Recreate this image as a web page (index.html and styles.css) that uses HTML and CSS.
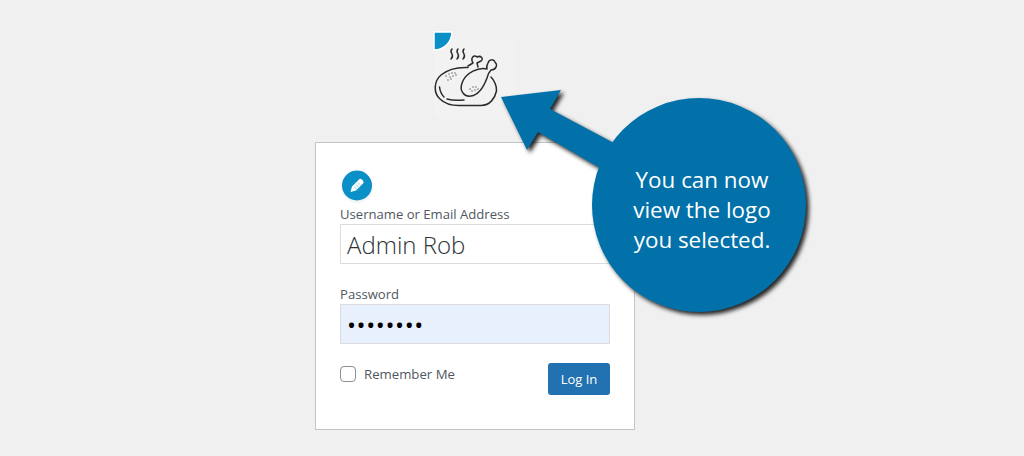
FILE: index.html
```html
<!DOCTYPE html>
<html lang="en">
<head>
<meta charset="utf-8">
<title>Log In</title>
<link rel="stylesheet" href="styles.css">
</head>
<body>
<main class="page">
  <div class="logo">
    <svg class="logo-art" viewBox="0 0 110 100" width="110" height="100" aria-hidden="true">
      <rect x="13" y="20" width="82" height="80" rx="10" fill="#f2f2f2"/>
      <path d="M13 12h18a18 18 0 0 1-18 18z" fill="#0a8fc6" stroke="#fff" stroke-width="1.5"/>
      <g fill="none" stroke="#2b2b2b" stroke-width="1.5" stroke-linecap="round" stroke-linejoin="round">
        <path d="M31 29c-2 2-1 3 0 5s1 3-1 5M37 29c-2 2-1 3 0 5s1 3-1 5M43 29c-2 2-1 3 0 5s1 3-1 5"/>
        <path d="M47 47.500C35 47 26 50 20 55C13 61 12 73 19 79C24 84 31 85.500 38 85.500H60C69 85.500 74 78 75.500 71C76 66 73 60 70 57"/>
        <path d="M18.500 67C19 71 20 74 23 77M26 79C31 80.500 37 80.500 43 80"/>
        <path d="M47 46L52 43C49 38 53 34 56 37C60 35 63 39 60 41L56 43L57 47"/>
        <path d="M66 49C58 47 45 52 41 63C38 72 44 77 50 76C58 75 63 66 66 58C67 54 68 52 70 50C75 50 77 45 74 42C73 39 68 39 67 43C66 45 65 47 66 49Z"/>
      </g>
      <g fill="#555">
        <circle cx="25" cy="56" r=".7"/><circle cx="28" cy="54" r=".7"/><circle cx="31" cy="53" r=".7"/><circle cx="34" cy="53" r=".7"/><circle cx="29" cy="57" r=".7"/><circle cx="32" cy="56" r=".7"/><circle cx="35" cy="55" r=".7"/><circle cx="27" cy="60" r=".7"/><circle cx="30" cy="59" r=".7"/>
        <circle cx="49" cy="69" r=".7"/><circle cx="52" cy="67" r=".7"/><circle cx="55" cy="67" r=".7"/><circle cx="51" cy="71" r=".7"/><circle cx="54" cy="70" r=".7"/><circle cx="57" cy="69" r=".7"/>
      </g>
    </svg>
  </div>
  <form class="card">
    <svg class="badge" viewBox="0 0 34 34" width="34" height="34" aria-hidden="true">
      <circle cx="17" cy="18" r="16" fill="#f4f4f4"/>
      <circle cx="17" cy="16.500" r="15" fill="#0a8fc6"/>
      <path d="M10.500 23l1.500-5.500 7-7a2 2 0 0 1 2.800 0l1.200 1.200a2 2 0 0 1 0 2.800l-7 7z" fill="#fff"/>
      <path d="M14 17.500l4 4M16 15.500l4 4M18 13.500l3 3" stroke="#6fc3e3" stroke-width=".8"/>
    </svg>
    <label class="field-label" for="user">Username or Email Address</label>
    <input class="field field-user" id="user" type="text" value="Admin Rob" readonly>
    <label class="field-label field-label-pass" for="pass">Password</label>
    <input class="field field-pass" id="pass" type="password" value="password" readonly>
    <div class="actions">
      <label class="remember"><input class="check" type="checkbox"> Remember Me</label>
      <button class="submit" type="button">Log In</button>
    </div>
  </form>
</main>
<div class="callout">
  <svg class="callout-art" viewBox="0 0 1024 456" width="1024" height="456" aria-hidden="true">
    <g class="callout-shape">
      <polygon points="501,97 561,90 550,109 614,143 600,168 538,132 527,150" fill="#0271a9"/>
      <circle cx="699" cy="205" r="107" fill="#0271a9"/>
    </g>
  </svg>
  <p class="callout-text">You can now<br>view the logo<br>you selected.</p>
</div>
</body>
</html>
```
FILE: styles.css
```css
html, body {
  margin: 0;
  height: 456px;
  overflow: hidden;
  background: #f0f0f1;
}

.page {
  width: 950px;
  display: flex;
  flex-direction: column;
  align-items: center;
  font-family: "Open Sans", "Noto Sans", sans-serif;
  color: #50575e;
}

.logo {
  height: 142px;
  width: 320px;
  display: flex;
  justify-content: center;
  padding-top: 20px;
  box-sizing: border-box;
}

.logo-art {
  display: block;
  margin-left: 1px;
  flex: none;
}

.card {
  box-sizing: border-box;
  width: 320px;
  height: 288px;
  background: #fff;
  border: 1px solid #c3c4c7;
  padding: 26px 24px 0;
  display: flex;
  flex-direction: column;
}

.badge {
  display: block;
  height: 34px;
  flex: none;
}

.field-label {
  font-size: 13.100px;
  line-height: 18px;
  height: 19px;
  margin-top: 2px;
}

.field-label-pass {
  margin-top: 21px;
}

.field {
  box-sizing: border-box;
  width: 270px;
  height: 40px;
  border: 1px solid #dcdcde;
  border-radius: 0;
  padding: 0 6px;
  margin: 0;
  outline: 0;
  font-family: "Open Sans", "Noto Sans", sans-serif;
  font-size: 24px;
  font-weight: 300;
  color: #2c3338;
  background: #fff;
}

.field-pass {
  background: #e8f0fe;
  color: #000;
  letter-spacing: .6px;
  font-weight: 400;
}

.actions {
  display: flex;
  justify-content: space-between;
  align-items: flex-start;
  margin-top: 19px;
}

.remember {
  display: flex;
  align-items: center;
  gap: 8px;
  font-size: 13.200px;
  line-height: 16px;
  margin-top: 3px;
}

.check {
  appearance: none;
  box-sizing: border-box;
  width: 16px;
  height: 16px;
  margin: 0;
  border: 1px solid #8c8f94;
  border-radius: 4px;
  background: #fff;
}

.submit {
  width: 62px;
  height: 32px;
  padding: 0;
  border: 0;
  border-radius: 3px;
  background: #2271b1;
  color: #fff;
  font-family: "Open Sans", "Noto Sans", sans-serif;
  font-size: 13px;
}

.callout {
  position: absolute;
  inset: 0;
  pointer-events: none;
}

.callout-art {
  position: absolute;
  left: 0;
  top: 0;
}

.callout-shape {
  filter: drop-shadow(3px 3px 2px rgba(0, 0, 0, .85));
}

.callout-text {
  position: absolute;
  left: 602px;
  top: 165px;
  width: 200px;
  margin: 0;
  text-align: center;
  color: #fff;
  font-family: "Open Sans", "Noto Sans", sans-serif;
  font-size: 22.400px;
  line-height: 30px;
}
```
